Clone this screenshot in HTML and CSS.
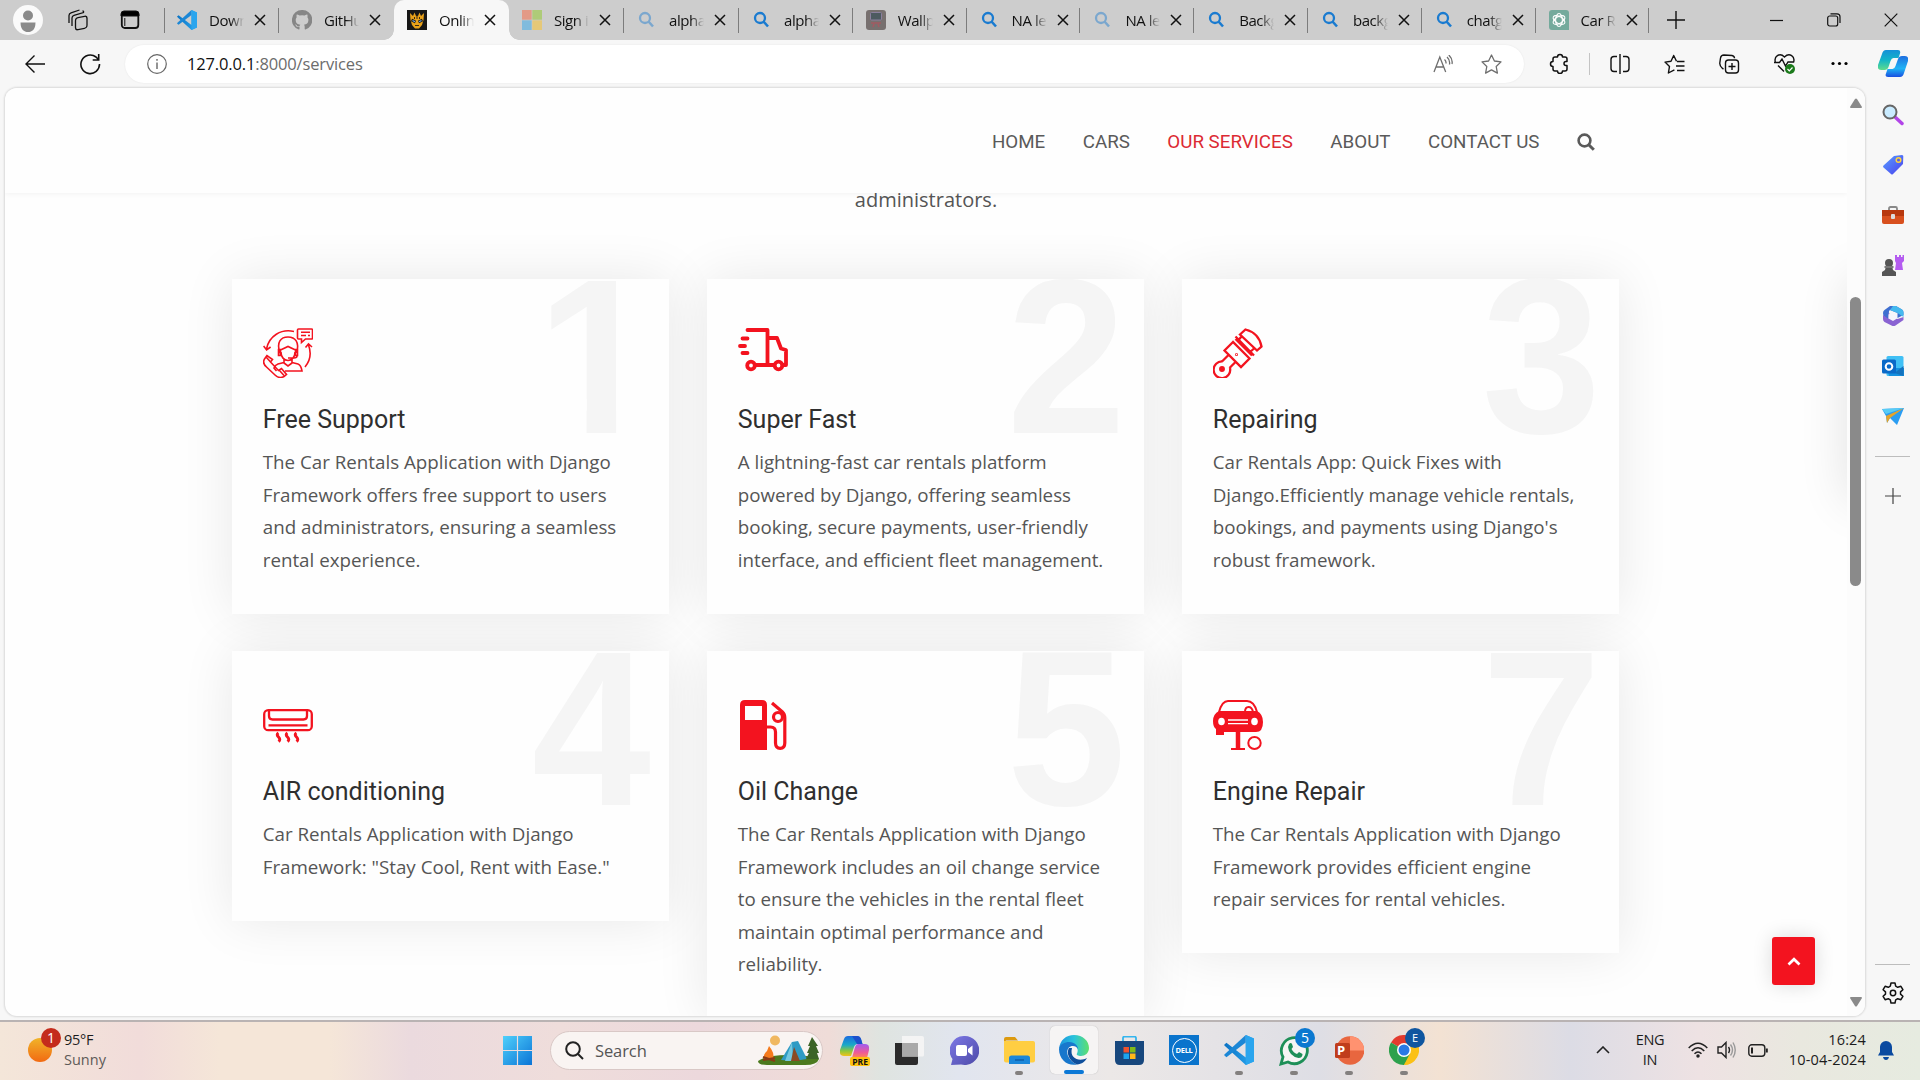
FILE: index.html
```html
<!DOCTYPE html>
<html lang="en">
<head>
<meta charset="utf-8">
<title>Online Car Rentals - Services</title>
<link rel="stylesheet" href="styles.css">
</head>
<body>
<svg class="defs" aria-hidden="true">
  <defs>
    <linearGradient id="gvs" x1="0" x2="1"><stop offset="0" stop-color="#0b72c4"/><stop offset="1" stop-color="#2ba8f0"/></linearGradient>
    <linearGradient id="gcop" x1="0" y1="0" x2="0" y2="1"><stop offset="0" stop-color="#1590d8"/><stop offset=".5" stop-color="#12b5c8"/><stop offset="1" stop-color="#5fdc8c"/></linearGradient>
    <linearGradient id="gcop2" x1="0" y1="0" x2="0" y2="1"><stop offset="0" stop-color="#1e6fe0"/><stop offset=".6" stop-color="#1fb4f5"/><stop offset="1" stop-color="#1a4fe0"/></linearGradient>
    <linearGradient id="gcl" x1="0" y1="0" x2="0" y2="1"><stop offset="0" stop-color="#1b6be0"/><stop offset=".45" stop-color="#1aa9c8"/><stop offset=".75" stop-color="#8fc83a"/><stop offset="1" stop-color="#f2c21a"/></linearGradient>
    <linearGradient id="gcr" x1="0" y1="0" x2="0" y2="1"><stop offset="0" stop-color="#a05cf0"/><stop offset=".6" stop-color="#ee5a9a"/><stop offset="1" stop-color="#ff8a50"/></linearGradient>
    <linearGradient id="gwin" x1="0" y1="0" x2="1" y2="1"><stop offset="0" stop-color="#4fd0fb"/><stop offset="1" stop-color="#0b74d6"/></linearGradient>
    <linearGradient id="gsun" x1="0" y1="0" x2="0" y2="1"><stop offset="0" stop-color="#f0b429"/><stop offset="1" stop-color="#f26a12"/></linearGradient>
    <linearGradient id="gedge" x1="0" y1="0" x2="1" y2="0"><stop offset="0" stop-color="#1b93de"/><stop offset=".5" stop-color="#2ac3dc"/><stop offset="1" stop-color="#5ee06c"/></linearGradient>
    <linearGradient id="gpur" x1="0" y1="0" x2="1" y2="1"><stop offset="0" stop-color="#7d78e6"/><stop offset="1" stop-color="#4d4aa8"/></linearGradient>
    <linearGradient id="gtag" x1="0" y1="0" x2="1" y2="1"><stop offset="0" stop-color="#58a0ff"/><stop offset="1" stop-color="#4a3fee"/></linearGradient>
    <symbol id="bing" viewBox="0 0 20 20"><circle cx="8" cy="8" r="5" fill="none" stroke="#1a7bd0" stroke-width="2.3"/><path d="M11.5 11.5 16 16.5" stroke="#1a7bd0" stroke-width="2.6"/></symbol>
    <symbol id="x" viewBox="0 0 12 12"><path d="M1 1 11 11M11 1 1 11" stroke="#111" stroke-width="1.5"/></symbol>
    <symbol id="code" viewBox="0 0 20 20"><path d="M14.5 0 20 2.4V17.6L14.5 20 1 7.7 0 6.6 1.6 5.2 14.5 15Z" fill="url(#gvs)"/><path d="M14.5 0 1 12.3 0 13.4 1.6 14.8 14.5 5Z" fill="#1b87d6"/><path d="M14.5 0 20 2.4V17.6L14.5 20Z" fill="#2aa5ee"/></symbol>
  </defs>
</svg>

<div class="tabstrip">
  <div class="strip-tools">
    <svg width="30" height="30" viewBox="0 0 30 30"><circle cx="15" cy="15" r="15" fill="#fafafa"/><circle cx="15" cy="10.5" r="5" fill="#8a8a8a"/><path d="M7.5 17.5h15c0 7-3.5 9.5-7.5 9.5s-7.5-2.5-7.5-9.5Z" fill="#8a8a8a"/></svg>
    <svg width="22" height="22" viewBox="0 0 22 22" fill="none" stroke="#111" stroke-width="1.3"><rect x="8.5" y="8" width="11.5" height="12" rx="2.5" transform="skewY(-12) translate(0 3)"/><path d="M5 17V9q0-2 2-2.7L16.5 3.5q.5-1.5-1-1.5M2 14V6.500q0-2 2-2.7L12.5 1"/></svg>
    <svg width="20" height="20" viewBox="0 0 20 20"><rect x="1.800" y="2" width="16.5" height="16" rx="3" fill="none" stroke="#111" stroke-width="1.8"/><path d="M1 6V4q0-3 3-3h12q3 0 3 3v2ZM4.800 8v8" stroke="#111" stroke-width="1"/></svg>
  </div>
  <div class="tabs">
    <div class="tab"><svg class="fav"><use href="#code"/></svg><span class="label">Download</span><svg class="close"><use href="#x"/></svg></div>
    <div class="tab no-line"><svg class="fav" viewBox="0 0 20 20"><path d="M10 0a10 10 0 0 0-3.200 19.500c.5.100.7-.2.700-.5v-2c-3 .6-3.600-1.200-3.600-1.200-.5-1.200-1-1.500-1-1.500 1-.1 1.700 1 1.700 1 1 1.600 2.500 1.100 3 .9.100-.7.400-1.100.7-1.400C5.800 14.500 3.700 13.500 3.700 9.800c0-1 .4-2 1-2.600-.1-.3-.4-1.300.1-2.700 0 0 .9-.2 2.800 1a9.400 9.400 0 0 1 5 0c1.800-1.200 2.700-1 2.700-1 .5 1.400.2 2.400.1 2.700.6.700 1 1.500 1 2.600 0 3.700-2.200 4.700-4.400 5 .4.300.7 1 .7 1.900V19c0 .3.200.6.700.5A10 10 0 0 0 10 0Z" fill="#868686"/></svg><span class="label">GitHub</span><svg class="close"><use href="#x"/></svg></div>
    <div class="tab active"><svg class="fav" viewBox="0 0 20 20"><path d="M0 0h20v20H0Z" fill="#171717"/><path d="M3 3l3 3 1.500-3.500L9 6h2l1.500-3.500L14 6l3-3-.5 7-1.500 5-3 3.500H8L5 15l-1.500-5Z" fill="#e8a11a"/><path d="M4.500 10l4 2M15.500 10l-4 2" stroke="#171717" stroke-width="2.600"/><path d="M5.500 10.500l2.500 1.300M14.500 10.500 12 11.800" stroke="#6fa4e0" stroke-width="1.200"/><path d="M10 5v4M7.500 7v2M12.500 7v2M8 15.500h4" stroke="#3a2a10"/></svg><span class="label">Online Car</span><svg class="close"><use href="#x"/></svg></div>
    <div class="tab"><svg class="fav" viewBox="0 0 20 20"><path d="M0 0h9.700v9.700H0Z" fill="#e39a86"/><path d="M10.300 0H20v9.700h-9.700Z" fill="#aecb78"/><path d="M0 10.300h9.700V20H0Z" fill="#80bbdd"/><path d="M10.300 10.300H20V20h-9.700Z" fill="#e5c878"/></svg><span class="label">Sign in</span><svg class="close"><use href="#x"/></svg></div>
    <div class="tab"><svg class="fav dim"><use href="#bing"/></svg><span class="label">alphabet</span><svg class="close"><use href="#x"/></svg></div>
    <div class="tab"><svg class="fav"><use href="#bing"/></svg><span class="label">alphabet</span><svg class="close"><use href="#x"/></svg></div>
    <div class="tab"><svg class="fav" viewBox="0 0 20 20"><rect width="20" height="20" rx="3" fill="#77706f"/><rect x="4.500" y="2.500" width="11" height="7.500" rx="1" fill="#4d5a60" stroke="#8b7f9e"/><path d="M5 13h10M7 17l1-3M13 17l-1-3" stroke="#a35a62" stroke-width="1.500"/></svg><span class="label">Wallpaper</span><svg class="close"><use href="#x"/></svg></div>
    <div class="tab"><svg class="fav"><use href="#bing"/></svg><span class="label">NA letter</span><svg class="close"><use href="#x"/></svg></div>
    <div class="tab"><svg class="fav dim"><use href="#bing"/></svg><span class="label">NA letter</span><svg class="close"><use href="#x"/></svg></div>
    <div class="tab"><svg class="fav"><use href="#bing"/></svg><span class="label">Background</span><svg class="close"><use href="#x"/></svg></div>
    <div class="tab"><svg class="fav"><use href="#bing"/></svg><span class="label">background</span><svg class="close"><use href="#x"/></svg></div>
    <div class="tab"><svg class="fav"><use href="#bing"/></svg><span class="label">chatgpt</span><svg class="close"><use href="#x"/></svg></div>
    <div class="tab"><svg class="fav" viewBox="0 0 20 20"><path d="M3 0h14q3 0 3 3v17H3q-3 0-3-3V3q0-3 3-3Z" fill="#74aa9c"/><g fill="none" stroke="#fff" stroke-width="1.100"><ellipse cx="10" cy="10" rx="3.400" ry="6.500"/><ellipse cx="10" cy="10" rx="3.400" ry="6.500" transform="rotate(60 10 10)"/><ellipse cx="10" cy="10" rx="3.400" ry="6.500" transform="rotate(120 10 10)"/></g></svg><span class="label">Car Rental</span><svg class="close"><use href="#x"/></svg></div>
  </div>
  <svg class="newtab" viewBox="0 0 18 18"><path d="M9 0v18M0 9h18" stroke="#111" stroke-width="1.400"/></svg>
  <div class="window-buttons">
    <svg width="14" height="14" viewBox="0 0 14 14"><path d="M0 7.500h13" stroke="#111" stroke-width="1.200"/></svg>
    <svg width="14" height="14" viewBox="0 0 14 14" fill="none" stroke="#111" stroke-width="1.200"><rect x=".7" y="3" width="10" height="10" rx="2"/><path d="M3.500.8h6.500q3 0 3 3V10"/></svg>
    <svg width="14" height="14" viewBox="0 0 14 14"><path d="M.7.700 13.300 13.300M13.300.700.7 13.300" stroke="#111" stroke-width="1.200"/></svg>
  </div>
</div>

<div class="toolbar">
  <div class="nav-buttons">
    <svg width="20" height="20" viewBox="0 0 20 20" fill="none" stroke="#111" stroke-width="1.400"><path d="M20 10H1M9.500 1.500 1 10l8.500 8.500"/></svg>
    <svg width="22" height="22" viewBox="0 0 22 22" fill="none" stroke="#111" stroke-width="1.600"><path d="M20.500 11A9.300 9.300 0 1 1 17 4L19.500 6.500M19.700 1v6h-6"/></svg>
  </div>
  <div class="address">
    <svg width="20" height="20" viewBox="0 0 20 20"><circle cx="10" cy="10" r="9.300" fill="none" stroke="#666" stroke-width="1.200"/><path d="M10 8.500v6.500M10 5v1.700" stroke="#666" stroke-width="1.400"/></svg>
    <span class="url"><b>127.0.0.1</b>:8000/services</span>
    <svg width="20" height="18" viewBox="0 0 20 18" fill="none" stroke="#6e6e6e" stroke-width="1.300"><path d="M1 17 6.800 2l5.900 15M3 12h7.500M11.500 4.500q1.800 1.500 1.500 4M14 2q3.300 3 2.500 7.500M15.800 0q4.200 4 3.200 9"/></svg>
    <svg width="21" height="20" viewBox="0 0 21 20" fill="none" stroke="#6e6e6e" stroke-width="1.300" stroke-linejoin="round"><path d="m10.500 1 2.900 6 6.600.9-4.800 4.600 1.200 6.600-5.900-3.200-5.900 3.200 1.200-6.600L1 7.900 7.600 7Z"/></svg>
  </div>
  <div class="tools">
    <span class="tool"><svg width="21" height="21" viewBox="0 0 21 21" fill="none" stroke="#111" stroke-width="1.500" stroke-linejoin="round"><path d="M6 4h2.500a2.500 2.500 0 1 1 5 0H16q2 0 2 2v2.500h-1a2 2 0 0 0 0 4h1V16q0 2-2 2h-2.500a2.500 2.500 0 0 1-5 0H6q-2 0-2-2v-2.500a2.500 2.500 0 1 1 0-5V6q0-2 2-2Z"/></svg></span>
    <span class="tool-line"></span>
    <span class="tool"><svg width="20" height="20" viewBox="0 0 20 20" fill="none" stroke="#111" stroke-width="1.400"><path d="M10 0v20M7 2.500H4q-3 0-3 3v9q0 3 3 3h3M13 2.500h3q3 0 3 3v9q0 3-3 3h-3"/></svg></span>
    <span class="tool"><svg width="21" height="20" viewBox="0 0 21 20" fill="none" stroke="#111" stroke-width="1.400" stroke-linejoin="round"><path d="M12.500 7.200 9.700 1.500 7 7.200l-6 .9 4.500 4.300L4.400 19l6-3.200M13 7.500h7.500M12 12h8.500M13 16.500h7.500"/></svg></span>
    <span class="tool"><svg width="21" height="20" viewBox="0 0 21 20" fill="none" stroke="#111" stroke-width="1.400"><rect x="6.500" y="6" width="13" height="13" rx="3"/><path d="M13 9v7M9.500 12.500h7M4.500 15l-1-.5Q.500 12 .8 9L1.500 4q.5-3 3.500-3l8 .5q2.500.5 2.500 2.800"/></svg></span>
    <span class="tool"><svg width="21" height="21" viewBox="0 0 21 21" fill="none" stroke="#111" stroke-width="1.400"><path d="M1.500 9.500C-.5 3.500 5.500-1 10.500 4c5-5 11-.5 9 5.500M0 9.500h5.500L8 6l3.500 7 2.500-4h6M4 12.500l6 6"/><circle cx="16" cy="16" r="5" fill="#1b7a1b" stroke="none"/><path d="m13.500 16 1.800 1.800 3.200-3.300" stroke="#fff" stroke-width="1.200"/></svg></span>
    <span class="tool"><svg width="17" height="5" viewBox="0 0 17 5"><circle cx="2" cy="2.500" r="1.600"/><circle cx="8.500" cy="2.500" r="1.600"/><circle cx="15" cy="2.500" r="1.600"/></svg></span>
    <span class="tool"><svg width="30" height="27" viewBox="0 0 30 27"><path d="M22 27H10q-3.500 0-2-3.500L9.500 19h5q2 0 3-3L20 9q1-3 4-3h3q4 0 3 5l-4 12q-1 4-4 4Z" fill="url(#gcop2)"/><path d="M8 0h12q3 0 2 3.500L20.500 8h-5q-2 0-3 3L10.500 17q-1 3-4 3H3q-4 0-3-5L4 4q1-4 4-4Z" fill="url(#gcop)"/></svg></span>
  </div>
</div>

<div class="middle">
  <div class="frame">
    <div class="page">
      <header class="site-header">
        <nav class="menu">
          <a>HOME</a><a>CARS</a><a class="current">OUR SERVICES</a><a>ABOUT</a><a>CONTACT US</a>
          <svg width="18" height="18" viewBox="0 0 18 18" fill="none" stroke="#5a5a5a"><circle cx="7.500" cy="7.500" r="5.900" stroke-width="2.600"/><path d="m11.500 11.500 5.300 5.300" stroke-width="3"/></svg>
        </nav>
      </header>
      <p class="intro">administrators.</p>
      <main class="services">
        <article class="card">
          <span class="number one">1</span>
          <svg class="icon" viewBox="0 0 50 50" fill="none" stroke="#f3131f" stroke-width="1.600"><path d="M35.500 1h13q1 0 1 1v8q0 1-1 1h-6l-4 3.500V11h-3q-1 0-1-1V2q0-1 1-1ZM38 4.200h9M38 7.500h5M45 7.500h2M31 3.500C18 .500 6 8 3.500 21M.6 18l3 4 4-3M45.500 17c3 8 1.500 16-3.500 22M42.500 19.500l3-3.500 3.500 3"/><path d="M17 25C13 14 18 9 25 9s12 5 8.500 16M15.500 21.500h2v6h-2ZM32.500 21.500h2v6h-2ZM17.500 22l7.500-3.500 7.500 3.500M18 24c0 5 3 8.500 7 8.500s7-3.500 7-8.500M34 28q0 2-3 2h-6M21 31.500V35l4 3 4-3v-3.500M21 34.500l-6 1.500q-3 1-4 4l2.500 3M29 34.500l6 1.500q3 1 4 7H22"/><path d="M4 27.500 1.500 31q-2.500 4 2 8L12 47q4 4 9 1.500l2.500-2-5-6-3 2-8-8.500 2-2.500ZM3.500 29.500l4.500 5M16.500 42.500l4.500 5"/></svg>
          <h3>Free Support</h3>
          <p>The Car Rentals Application with Django Framework offers free support to users and administrators, ensuring a seamless rental experience.</p>
        </article>
        <article class="card">
          <span class="number">2</span>
          <svg class="icon" viewBox="0 0 50 50" fill="none" stroke="#f3131f" stroke-width="3.800" stroke-linecap="round" stroke-linejoin="round"><path d="M9.500 2H29.500V36.500M29.500 10H39L43 20.500 48 22V37H44.500M17 37H36M4.500 10.500H9.500M2 18H7M4.500 25H9.500"/><circle cx="13" cy="37.500" r="3.800"/><circle cx="40.500" cy="37.500" r="3.800"/></svg>
          <h3>Super Fast</h3>
          <p>A lightning-fast car rentals platform powered by Django, offering seamless booking, secure payments, user-friendly interface, and efficient fleet management.</p>
        </article>
        <article class="card">
          <span class="number">3</span>
          <svg class="icon" viewBox="0 0 50 50" fill="none" stroke="#f3131f" stroke-width="2.300"><path d="M20 14 11.500 22.500 28 39 36.500 30.500ZM27 6.500 32.500 1.500Q46 5 48.500 18.500L44 22.500ZM22.500 11 39 27.500M22.500 8.500l18.500 19M25 12.500 29 8M36 25l5-4.500M15.500 27 9 33.500M22.500 34 16.500 40"/><path d="M17 40A8.300 8.300 0 1 1 9.500 33.500"/><circle cx="9" cy="41" r="1.800" fill="#f3131f"/><circle cx="23.500" cy="26.500" r=".4"/></svg>
          <h3>Repairing</h3>
          <p>Car Rentals App: Quick Fixes with Django.Efficiently manage vehicle rentals, bookings, and payments using Django's robust framework.</p>
        </article>
        <article class="card">
          <span class="number">4</span>
          <svg class="icon" viewBox="0 0 50 50" fill="none" stroke="#f3131f" stroke-width="2.300"><rect x="1.200" y="10.200" width="47.600" height="20" rx="4"/><path d="M6 10v6q0 3.500 3.500 3.500h31q3.500 0 3.500-3.500v-6M5.500 25.300h39"/><path d="M15.500 33q-2.500 1.500 0 4t0 4.500M24.500 33q-2.500 1.500 0 4t0 4.500M33.500 33q-2.500 1.500 0 4t0 4.500" stroke-width="3"/></svg>
          <h3>AIR conditioning</h3>
          <p>Car Rentals Application with Django Framework: "Stay Cool, Rent with Ease."</p>
        </article>
        <article class="card">
          <span class="number">5</span>
          <svg class="icon" viewBox="0 0 50 50" fill="none" stroke="#f3131f" stroke-width="3.200"><path d="M2 50V5q0-5 5-5h17q5 0 5 5v45ZM7 6v14h17V6Z" fill="#f3131f" stroke="none" fill-rule="evenodd"/><path d="M34 3 44.500 12q2.300 2 2.300 6v25q0 5.300-4.600 5.300T37.500 43V32q0-5-5-5H28"/><circle cx="40" cy="17" r="4.500"/></svg>
          <h3>Oil Change</h3>
          <p>The Car Rentals Application with Django Framework includes an oil change service to ensure the vehicles in the rental fleet maintain optimal performance and reliability.</p>
        </article>
        <article class="card">
          <span class="number">7</span>
          <svg class="icon" viewBox="0 0 50 50" fill="none" stroke="#f3131f" stroke-width="2"><path d="M6 12Q9 1 15 1h19q7 0 10 11M32 12q0-5 3.500-5T40 12"/><path d="M6 11h38q6 3 6 11 0 10-7 10H11v3H3v-6q-3-2-3-8 0-7 6-10Z" fill="#f3131f" stroke="none"/><ellipse cx="8.500" cy="21.500" rx="3.300" ry="3.800" fill="#fff" stroke="none"/><ellipse cx="41.500" cy="21.500" rx="3.300" ry="3.800" fill="#fff" stroke="none"/><path d="M15 20h20M15 23.700h20" stroke="#fff" stroke-width="1.300"/><path d="M25 31v18" stroke-width="4.500"/><path d="M18 49h14"/><ellipse cx="41.500" cy="43" rx="6.200" ry="6" stroke-width="2"/></svg>
          <h3>Engine Repair</h3>
          <p>The Car Rentals Application with Django Framework provides efficient engine repair services for rental vehicles.</p>
        </article>
      </main>
      <div class="offscreen-slide"></div>
      <a class="to-top"><svg width="14" height="9" viewBox="0 0 14 9"><path d="m1.500 7.500 5.500-5.300 5.500 5.300" fill="none" stroke="#fff" stroke-width="2.700"/></svg></a>
    </div>
    <div class="scrollbar">
      <svg width="12" height="10" viewBox="0 0 12 10"><path d="M0 9 5 1q1-1 2 0l5 8q0 1-1 1H1q-1 0-1-1Z" fill="#8a8a8a"/></svg>
      <span class="thumb"></span>
      <svg width="12" height="10" viewBox="0 0 12 10"><path d="M0 1 5 9q1 1 2 0l5-8q0-1-1-1H1Q0 0 0 1Z" fill="#8a8a8a"/></svg>
    </div>
  </div>
  <aside class="sidebar">
    <svg viewBox="0 0 22 22"><path d="m13 13 7 6.500" stroke="#b245e8" stroke-width="3.500" stroke-linecap="round"/><circle cx="8" cy="8" r="6.500" fill="#c9ebff" stroke="#666" stroke-width="2"/></svg>
    <svg viewBox="0 0 22 22"><path d="M12 2 20 1q1.500 0 1.300 1.500L21 10 11 20q-1 1-2 0L1.500 13.500q-1-1 0-2Z" fill="url(#gtag)"/><circle cx="16.500" cy="6" r="2.300" fill="#5a62e8" stroke="#ffd43b" stroke-width="1.500"/></svg>
    <svg viewBox="0 0 22 22"><path d="M7 6V4.500Q7 3 8.500 3h5Q15 3 15 4.500V6" fill="none" stroke="#888" stroke-width="1.800"/><rect y="6" width="22" height="14" rx="2" fill="#d8501e"/><path d="M0 6h22v6H0Z" fill="#b8380e"/><rect x="9" y="10" width="4" height="5" rx="1" fill="#ddd"/></svg>
    <svg viewBox="0 0 22 22"><path d="M13 0h2v2h2V0h2v2h1.500V0H22v6l-2 2 1 7h-8l1-7-1-2Z" fill="#b45cf0"/><path d="M3 8a4 4 0 1 1 8 0q0 2-1 3l1 4 3 2v4H0v-4l3-2 1-4q-1-1-1-3Z" fill="#555"/><path d="M2.500 12h9" stroke="#777" stroke-width="2"/></svg>
    <svg viewBox="0 0 22 22"><path d="M8 1h6l6 3.500q1.500 1 1.500 3V10l-6 3V8L8 5l-1 1-.5 10L2 15 1 8q0-2 1.500-3Z" fill="#3f6fd0"/><path d="M11 1h3l6 3.500q1.500 1 1.500 3V12l-6-4L8 5Z" fill="#45b9ee"/><path d="M1 10l5.500 4V8L15.500 14l6-2v3l-8 5.500q-2 1-4 0L2.500 17Q1 16 1 14Z" fill="#8a63d2"/><path d="m11 7 4 2.500v4L11 16l-4.500-2.500v-4Z" fill="#f5f5fb"/></svg>
    <svg viewBox="0 0 22 22"><path d="M6 1h14q1.500 0 1.500 1.500V21H6q-1.500 0-1.500-1.500v-17Q4.500 1 6 1Z" fill="#40c0f5"/><path d="M5 13h17v8H7Z" fill="#1490df"/><path d="m21.500 11-9 7 9 3Z" fill="#1472bd"/><rect y="4.500" width="14" height="14" rx="1.500" fill="#0a6ac8"/><circle cx="7" cy="11.500" r="3.300" fill="none" stroke="#fff" stroke-width="2"/></svg>
    <svg viewBox="0 0 22 22"><path d="M0 4 22 3 15 20 8 13 5 18 4 11Z" fill="#2b9df2"/><path d="M22 3 4 11l1 7 3-5Z" fill="#e6a42a"/><path d="M0 4 22 3 4 9Z" fill="#58ccf5"/></svg>
    <span class="side-line"></span>
    <svg class="side-plus" viewBox="0 0 16 16"><path d="M8 0v16M0 8h16" stroke="#444" stroke-width="1.200"/></svg>
    <span class="side-line side-bottom"></span>
    <svg class="side-gear" viewBox="0 0 22 22" fill="none" stroke="#111" stroke-width="1.500" stroke-linejoin="round"><path d="M9 1h4l.7 3.200 2 1.100 3.200-1 2 3.400-2.400 2.200v2.200l2.400 2.200-2 3.400-3.200-1-2 1.100L13 21H9l-.7-3.200-2-1.100-3.200 1-2-3.400 2.400-2.200V9.900L1.100 7.700l2-3.400 3.200 1 2-1.100Z"/><circle cx="11" cy="11" r="2.700"/></svg>
  </aside>
</div>

<footer class="taskbar">
  <div class="weather">
    <span class="sun"><svg width="24" height="24" viewBox="0 0 24 24"><circle cx="12" cy="12" r="12" fill="url(#gsun)"/></svg><i class="badge alert">1</i></span>
    <span class="forecast"><span>95°F</span><span class="muted">Sunny</span></span>
  </div>
  <div class="dock">
    <svg class="start" viewBox="0 0 30 30"><path d="M0 0h14.400v14.400H0ZM15.600 0H30v14.400H15.600ZM0 15.600h14.400V30H0ZM15.600 15.600H30V30H15.600Z" fill="url(#gwin)"/></svg>
    <div class="search">
      <svg width="19" height="19" viewBox="0 0 19 19" fill="none" stroke="#222" stroke-width="2"><circle cx="8" cy="8" r="6.800"/><path d="m13 13 5 5"/></svg>
      <span>Search</span>
      <svg width="62" height="30" viewBox="0 0 62 30"><path d="M0 26q8-6 30-6t31 4q-2 6-14 6H9Q0 30 0 26Z" fill="#4c7a1f"/><circle cx="17" cy="5.500" r="5" fill="#f0b860"/><path d="m23 25 11-18 6-1 9 18-13 2Z" fill="#2f9bc4"/><path d="m34 7 1 19-8 0Z" fill="#74c8e0"/><path d="m36 12 6 14h-9Z" fill="#8a4a24"/><path d="m54 2 6 9h-2l3 7h-2l2 6H48l3-6h-2l3-7h-2Z" fill="#3c6427"/><path d="M11 11q6 7 4 13H6q-1-5 3-8Z" fill="#f57a1c"/><path d="m5 25 12-2M5 22l12 4" stroke="#8a3a14" stroke-width="2"/></svg>
    </div>
    <span class="app"><svg width="29" height="29" viewBox="0 0 29 29"><path d="M8 0h9q3 0 4 3l1.500 5H18q-3 0-4 3l-3 9H4q-5 0-4-6L4 3q1-3 4-3Z" fill="url(#gcl)"/><path d="M12 0h5q3 0 4 3l1.500 5H17Z" fill="#1d50cc"/><path d="M18 8h7q5 0 4 6l-2 8H12l3-11q1-3 3-3Z" fill="url(#gcr)"/></svg><i class="pre">PRE</i></span>
    <span class="app"><svg width="29" height="29" viewBox="0 0 29 29"><path d="M0 7h23v20q0 2-2 2H2q-2 0-2-2Z" fill="#2b2b2b"/><path d="M7 0h20q2 0 2 2v17q0 1.500-1.500 1.500H7Z" fill="#f4f4f4"/><path d="M7 7h16v13.500H7Z" fill="#a9a9a9"/></svg></span>
    <span class="app"><svg width="29" height="29" viewBox="0 0 29 29"><path d="M14.500 0A14.500 14.500 0 1 1 11 28.500L1 29l1.500-6A14.500 14.500 0 0 1 14.500 0Z" fill="url(#gpur)"/><rect x="6" y="9" width="11" height="11" rx="2" fill="#fff"/><path d="m18 13 4.500-3.500v10L18 16Z" fill="#fff"/></svg></span>
    <span class="app open"><svg width="31" height="27" viewBox="0 0 31 27"><path d="M2 0h9l3 3.500H2L0 6V2q0-2 2-2Z" fill="#dc9a10"/><path d="M0 4h29q2 0 2 2v17.500q0 2-2 2H2q-2 0-2-2Z" fill="#ffce42"/><path d="M5 27v-6q0-2.500 2.500-2.500h16Q26 18.500 26 21v6Z" fill="#1b87da"/><path d="M11 23h9" stroke="#0f5ea8" stroke-width="1.500"/></svg></span>
    <span class="app selected"><svg width="30" height="30" viewBox="0 0 30 30"><path d="M0 14C1 5 7 0 15 0c9 0 15 6 15 13 0 5-4 8-8 8-3 0-5-1-4-2.500C20 15 18 9 11 9 5 9 1 12 0 14Z" fill="url(#gedge)"/><path d="M0 14C1 9 6 7 10 7c6 0 9 4 9 7-1-2-3-3-5-3-5 0-7 5-5 10 2 4 5 7 9 8.500C9 31.500 0 25 0 14Z" fill="#1877cc"/><path d="M10 13c-3 5 0 13 8 16.500 5-.5 8-3 10-6.500-7 4-18 1-15-10Z" fill="#0f4f9c"/></svg></span>
    <span class="app"><svg width="29" height="29" viewBox="0 0 29 29"><path d="M8 6V2q0-1.300 1.300-1.300h10.400Q21 .700 21 2v4" fill="none" stroke="#35b5ee" stroke-width="1.800"/><path d="M0 5h29v19q0 5-5 5H5q-5 0-5-5Z" fill="#17477d"/><path d="M8.500 11H14v5.500H8.500Z" fill="#f0522d"/><path d="M15 11h5.500v5.500H15Z" fill="#7fba1a"/><path d="M8.500 17.500H14V23H8.500Z" fill="#1ba4ee"/><path d="M15 17.500h5.500V23H15Z" fill="#ffb81a"/></svg></span>
    <span class="app"><span class="dell"><i>DELL</i></span></span>
    <span class="app open"><svg width="30" height="30"><use href="#code"/></svg></span>
    <span class="app open"><svg width="31" height="31" viewBox="0 0 31 31"><path d="M2 29 4 22A13 13 0 1 1 9 27Z" fill="#f5f5f3" stroke="#1d8f57" stroke-width="2.800"/><path d="M10 9q2-2 3 0l1 3-1.500 2q2 4 5.500 5l2-2 3.500 2q0 4-4 4Q10 21 9 12Z" fill="#1d8f57"/></svg><i class="badge">5</i></span>
    <span class="app open"><svg width="29" height="29" viewBox="0 0 29 29"><circle cx="15" cy="14.500" r="14.300" fill="#e8663f"/><path d="M15 .2A14.300 14.300 0 0 1 29.300 14.500H15Z" fill="#ff9270"/><rect y="7" width="15" height="15" rx="1.500" fill="#c03d1c"/></svg><i class="ppt-letter">P</i></span>
    <span class="app open"><svg width="30" height="30" viewBox="0 0 30 30"><path d="M15 15 2 7.500A15 15 0 0 1 28 7.500Z" fill="#e33b2e"/><path d="M15 15 28 7.500A15 15 0 0 1 15 30Z" fill="#fbc116"/><path d="M15 15 15 30A15 15 0 0 1 2 7.500Z" fill="#2da14c"/><path d="m8.500 18.500 6.500 11.500 7-11Z" fill="#2da14c"/><path d="m21 18.500-6 11.500q8 0 12-7Z" fill="#fbc116"/><circle cx="15" cy="15" r="7" fill="#fff"/><circle cx="15" cy="15" r="5.500" fill="#2a78e4"/></svg><i class="badge initial">E</i></span>
  </div>
  <div class="tray">
    <svg width="14" height="8" viewBox="0 0 14 8"><path d="m1 7 6-6 6 6" fill="none" stroke="#222" stroke-width="1.600"/></svg>
    <span class="lang"><span>ENG</span><span>IN</span></span>
    <svg class="wifi" width="20" height="16" viewBox="0 0 20 16" fill="none" stroke="#222" stroke-width="1.500"><path d="M.7 6q9.300-9.500 18.600 0M3.700 9q6.300-6.500 12.600 0M6.500 11.800q3.500-3.500 7 0"/><circle cx="10" cy="14" r="1" fill="#222"/></svg>
    <svg class="volume" width="19" height="18" viewBox="0 0 19 18" fill="none" stroke="#222" stroke-width="1.400"><path d="M1 6h3.500L9 1.500v15L4.500 12H1ZM11.500 6q2 3 0 6"/><path d="M13.500 3.500q4 5.500 0 11M16 1.500q4.500 7.500 0 15" stroke="#999"/></svg>
    <svg class="battery" width="20" height="13" viewBox="0 0 20 13" fill="none" stroke="#222" stroke-width="1.400"><rect x=".8" y=".8" width="16" height="11.400" rx="3"/><path d="M18.800 4.500v4M4 3.500v6" stroke-width="2"/></svg>
    <span class="clock"><span>16:24</span><span>10-04-2024</span></span>
    <svg class="bell" width="16" height="19" viewBox="0 0 16 19"><path d="M8 0a6 6 0 0 1 6 6v5l2 3.500H0L2 11V6a6 6 0 0 1 6-6ZM5 16h6q-.7 3-3 3t-3-3Z" fill="#0a4aa0"/></svg>
  </div>
</footer>
</body>
</html>
```
FILE: styles.css
```css
* { box-sizing: border-box; }

body {
  margin: 0;
  width: 1920px;
  height: 1080px;
  overflow: hidden;
  display: flex;
  flex-direction: column;
  background: #f7f7f7;
  font-family: "Open Sans", "Noto Sans", sans-serif;
}

svg { display: block; flex: none; }
i { font-style: normal; }
.defs { position: absolute; width: 0; height: 0; }

/* Tab strip */
.tabstrip {
  height: 40px;
  flex: none;
  display: flex;
  align-items: center;
  background: #cdcdcd;
}
.strip-tools {
  width: 164px;
  flex: none;
  display: flex;
  align-items: center;
  padding-left: 13px;
}
.strip-tools svg:nth-child(2) { margin-left: 24px; }
.strip-tools svg:nth-child(3) { margin-left: 31px; }
.tabs {
  display: grid;
  grid-template-columns: repeat(5, 115px) repeat(8, 113.8px);
  height: 40px;
}
.tab {
  position: relative;
  display: flex;
  align-items: center;
  padding-left: 13px;
  font-size: 15px;
  letter-spacing: -0.45px;
  color: #111;
}
.tab::after {
  content: "";
  position: absolute;
  right: 0;
  top: 8px;
  width: 1px;
  height: 25px;
  background: #7c7c7c;
}
.tab:first-child::before {
  content: "";
  position: absolute;
  left: 0;
  top: 8px;
  width: 1px;
  height: 25px;
  background: #7c7c7c;
}
.tab.no-line::after { display: none; }
.tab.active {
  background: #f7f7f7;
  border-radius: 10px 10px 0 0;
}
/* Flared feet where the active tab meets the toolbar */
.tab.active::before, .tab.active::after {
  content: "";
  position: absolute;
  top: auto;
  bottom: 0;
  width: 10px;
  height: 10px;
}
.tab.active::before { left: -10px; background: radial-gradient(circle at 0 0, #cdcdcd 9.5px, #f7f7f7 10px); }
.tab.active::after { right: -10px; background: radial-gradient(circle at 100% 0, #cdcdcd 9.5px, #f7f7f7 10px); }
.fav { width: 20px; height: 20px; }
.fav.dim { opacity: 0.45; }
.label {
  width: 35px;
  margin-left: 12px;
  overflow: hidden;
  white-space: nowrap;
  -webkit-mask-image: linear-gradient(90deg, #000 62%, transparent);
  mask-image: linear-gradient(90deg, #000 62%, transparent);
}
.close { width: 12px; height: 12px; margin-left: 10px; }
.newtab { width: 18px; height: 18px; margin-left: 18px; }
.window-buttons {
  margin-left: auto;
  padding-right: 22px;
  display: flex;
  gap: 43px;
}

/* Toolbar */
.toolbar {
  height: 48px;
  flex: none;
  display: flex;
  align-items: center;
  padding-bottom: 1px;
}
.nav-buttons {
  width: 125px;
  flex: none;
  display: flex;
  align-items: center;
  gap: 34px;
  padding-left: 25px;
}
.address {
  width: 1399px;
  height: 38px;
  flex: none;
  display: flex;
  align-items: center;
  padding: 0 22px;
  border-radius: 19px;
  background: #fff;
  box-shadow: 0 0 2px rgba(0, 0, 0, 0.08);
}
.url {
  flex: 1;
  margin-left: 20px;
  padding-bottom: 1px;
  font-size: 16.5px;
  letter-spacing: -0.15px;
  color: #6c6c6c;
}
.url b { font-weight: 400; color: #111; }
.address svg:last-child { margin-left: 28px; }
.tools { display: flex; align-items: center; padding-left: 8px; }
.tool { width: 55px; display: flex; justify-content: center; }
.tool:last-child { width: 52px; }
.tool-line { width: 1px; height: 22px; margin: 0 2px; background: #c4c4c4; }

/* Browser viewport */
.middle { height: 932px; flex: none; display: flex; }
.frame {
  width: 1860px;
  height: 928px;
  margin-left: 5px;
  flex: none;
  display: flex;
  overflow: hidden;
  border-radius: 12px;
  background: #fefefe;
  box-shadow: 0 0 2px 1px rgba(0, 0, 0, 0.12);
}
.page {
  position: relative;
  width: 1842px;
  height: 928px;
  flex: none;
  overflow: hidden;
}
.site-header {
  position: relative;
  z-index: 2;
  height: 105px;
  background: #fefefe;
  box-shadow: 0 0 6px rgba(0, 0, 0, 0.07);
}
.menu {
  height: 107px;
  display: flex;
  align-items: center;
  justify-content: flex-end;
  gap: 37.5px;
  padding-right: 252px;
  font: 18.75px/30px Roboto, sans-serif;
  color: #5a5a5a;
}
.menu a { padding-top: 1px; }
.menu .current { color: #dc2a33; }
.intro {
  margin: -9px 0 0;
  text-align: center;
  font-size: 20px;
  line-height: 32px;
  color: #555;
}
.services {
  isolation: isolate;
  display: grid;
  grid-template-columns: repeat(3, 437.5px);
  justify-content: center;
  align-items: start;
  gap: 37.5px;
  margin-top: 63px;
  padding-right: 1px;
}
.card {
  position: relative;
  padding: 49px 31px 37.5px;
  background: #fefefe;
}
.card::before {
  content: "";
  position: absolute;
  z-index: -1;
  inset: 0;
  box-shadow: 0 0 50px rgba(0, 0, 0, 0.09);
}
.card > * { position: relative; }
.card .number {
  position: absolute;
  top: 0;
  right: 18px;
  font: bold 221px/155px "Liberation Sans", Arial, sans-serif;
  color: #f5f5f5;
  transform: scaleX(0.97);
  transform-origin: 100% 0;
}
/* The figure one stands on a bare stem, without its foot */
.card .number.one {
  right: 13px;
  clip-path: polygon(0 0, 82px 0, 82px 100%, 51.5px 100%, 51.5px 120px, 0 120px);
}
.icon { width: 50px; height: 50px; }
.card h3 {
  margin: 27px 0 11.2px;
  font: 25px/30px Roboto, sans-serif;
  color: #2f2f2f;
}
.card p {
  margin: 0;
  font-size: 18.75px;
  line-height: 32.5px;
  color: #555;
}
.offscreen-slide {
  position: absolute;
  left: 1843px;
  top: 191px;
  width: 100px;
  height: 222px;
  box-shadow: 0 0 50px rgba(0, 0, 0, 0.12);
}
.to-top {
  position: absolute;
  z-index: 2;
  right: 32px;
  bottom: 31px;
  width: 43px;
  height: 48px;
  display: flex;
  align-items: center;
  justify-content: center;
  border-radius: 3px;
  background: #f3131f;
  box-shadow: 0 0 20px rgba(0, 0, 0, 0.14);
}
.scrollbar {
  flex: 1;
  display: flex;
  flex-direction: column;
  align-items: center;
  justify-content: space-between;
  padding: 10px 1px 9px 0;
  background: #fcfcfc;
}
.thumb {
  width: 11px;
  height: 289px;
  margin: 189px 0 auto;
  border-radius: 6px;
  background: #8a8a8a;
}

/* Edge sidebar */
.sidebar {
  flex: 1;
  display: flex;
  flex-direction: column;
  align-items: center;
  padding: 16px 0 16px 0;
}
.sidebar svg { width: 22px; height: 22px; margin-bottom: 28.2px; }
.side-line { width: 35px; height: 1px; margin-top: 1px; background: #bdbdbd; }
.sidebar .side-plus { width: 16px; height: 16px; margin: 31px 0 auto; }
.side-bottom { margin: 0; }
.sidebar .side-gear { margin: 17px 0 0; }

/* Taskbar */
.taskbar {
  height: 60px;
  flex: none;
  display: flex;
  align-items: center;
  padding-bottom: 2px;
  border-top: 2px solid #b9b3b3;
  font-size: 14.5px;
  letter-spacing: -0.3px;
  color: #1c1c1c;
  background: linear-gradient(90deg, #f4e6d9 0, #f1dcda 140px, #f5e6d8 220px, #f5e6d8 330px, #ebdade 410px, #efdddb 560px, #ecd8dc 700px, #efdcd8 830px, #dfe4e0 880px, #e1e5ef 960px, #ece8e7 1110px, #dedee5 1320px, #f3e2d3 1440px, #dcdce5 1570px, #eee2e3 1700px, #e9e8df 1800px, #e6ebe0 1920px);
}
.weather { width: 503px; flex: none; display: flex; align-items: center; padding-left: 28px; }
.sun { position: relative; }
.forecast { display: flex; flex-direction: column; margin-left: 12px; line-height: 20px; }
.forecast .muted { letter-spacing: 0; }
.muted { color: #5e5a58; }
.badge {
  position: absolute;
  right: -9px;
  top: -9px;
  width: 20px;
  height: 20px;
  border-radius: 50%;
  background: #0b78d0;
  color: #fff;
  font-size: 14px;
  line-height: 20px;
  letter-spacing: 0;
  text-align: center;
}
.badge.alert { background: #c42b1c; top: -10px; }
.dock { width: 927px; flex: none; display: flex; align-items: center; }
.start { width: 29px; height: 29px; }
.search {
  width: 273px;
  height: 39px;
  margin: 0 7px 0 18px;
  padding: 0 2px 0 14px;
  flex: none;
  display: flex;
  align-items: center;
  border-radius: 20px;
  background: #f9f4f2;
  border: 1px solid #d9c8c6;
  font-size: 16.5px;
  letter-spacing: -0.1px;
  color: #555;
}
.search span { flex: 1; margin-left: 11px; }
.app {
  position: relative;
  width: 48px;
  height: 48px;
  margin-right: 7px;
  flex: none;
  display: flex;
  align-items: center;
  justify-content: center;
}
.app .badge { right: 3px; top: 2px; }
.app .badge.initial { background: #0f56a0; font-size: 11px; }
.app.open::after, .app.selected::after {
  content: "";
  position: absolute;
  bottom: -1px;
  width: 8px;
  height: 4px;
  border-radius: 2px;
  background: #83807f;
}
.app.selected { border-radius: 5px; background: #f6f4f4; box-shadow: 0 0 1px #aaa; }
.app.selected::after { width: 20px; background: #0b78d6; bottom: 0; }
.pre {
  position: absolute;
  right: 8px;
  bottom: 8px;
  padding: 0 2px;
  border-radius: 2px;
  background: #ffc20e;
  color: #111;
  font-size: 8.5px;
  font-weight: 700;
  line-height: 9px;
  letter-spacing: 0;
}
.dell {
  width: 30px;
  height: 30px;
  display: flex;
  align-items: center;
  justify-content: center;
  background: #0a74cc;
}
.dell i {
  width: 25px;
  height: 25px;
  border: 1px solid #fff;
  border-radius: 50%;
  color: #fff;
  font-size: 7.5px;
  font-weight: 700;
  line-height: 23px;
  text-align: center;
}
.ppt-letter {
  position: absolute;
  left: 12px;
  top: 14px;
  width: 10px;
  color: #fff;
  font-size: 13px;
  font-weight: 700;
  line-height: 20px;
}
.tray { flex: 1; display: flex; align-items: center; padding-left: 166px; }
.lang { width: 40px; margin-left: 20px; display: flex; flex-direction: column; align-items: center; line-height: 20px; }
.wifi { margin-left: 18px; }
.volume { margin-left: 9px; }
.battery { margin-left: 12px; }
.clock { width: 98px; display: flex; flex-direction: column; align-items: flex-end; line-height: 20px; letter-spacing: 0.15px; }
.bell { margin-left: 12px; }
```
